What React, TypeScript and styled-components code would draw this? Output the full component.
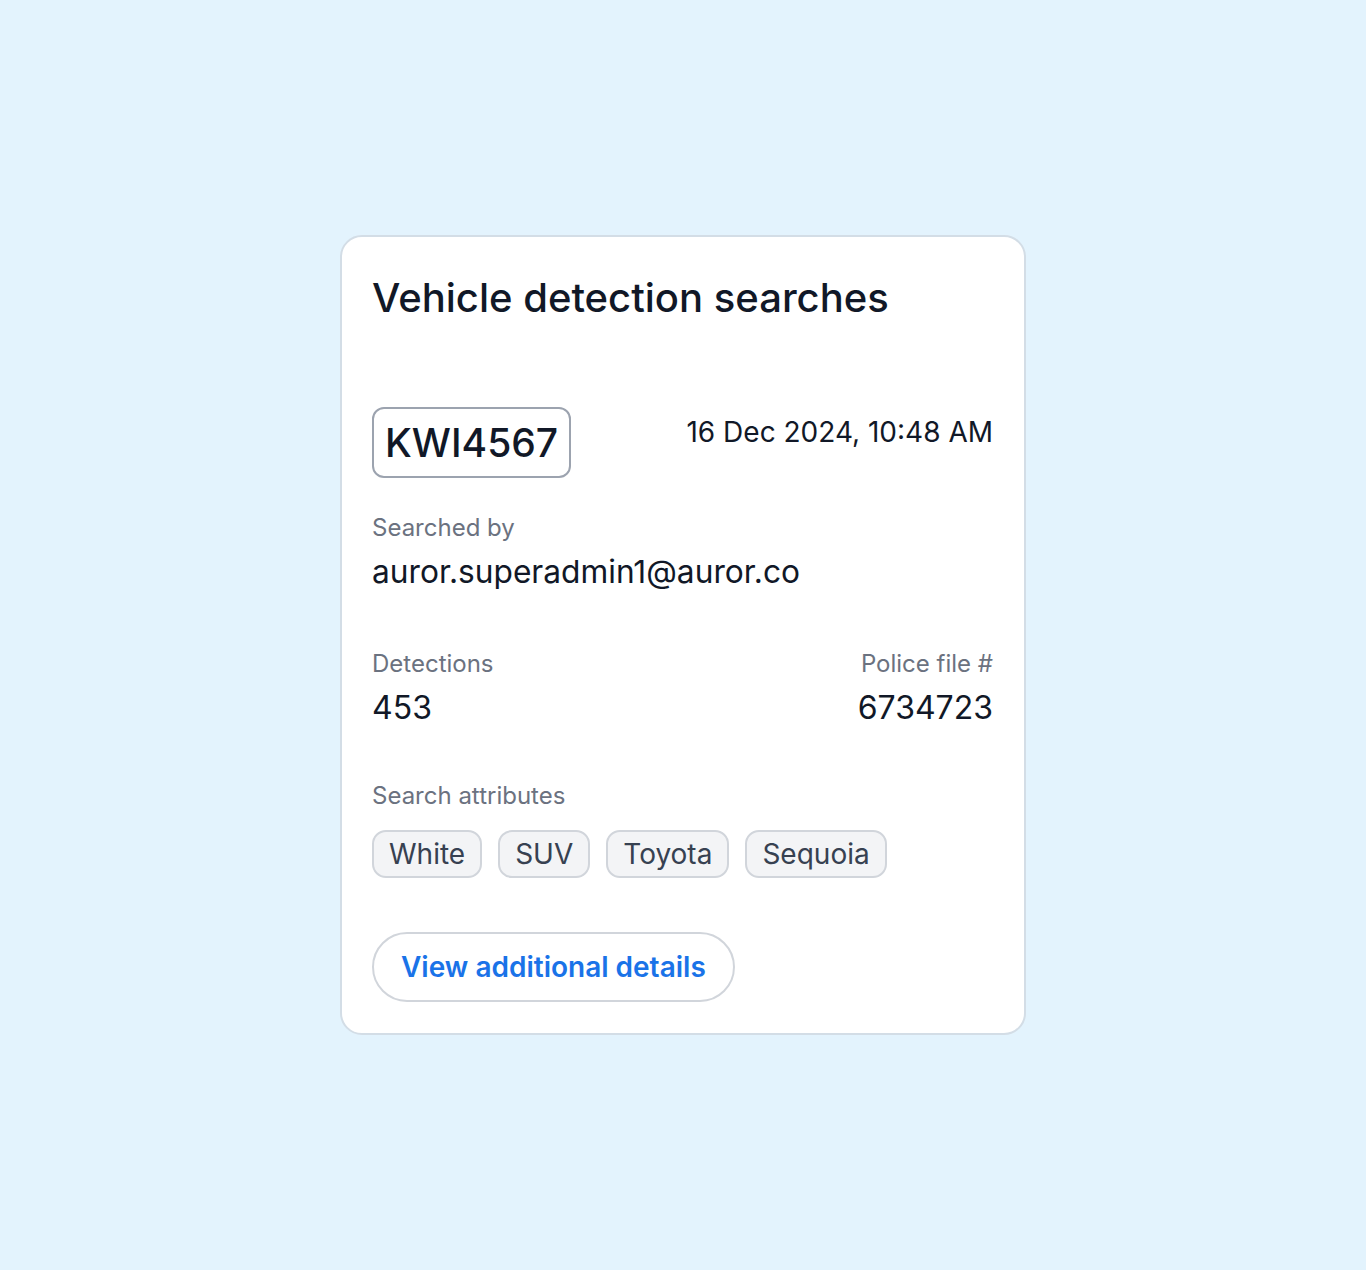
import * as React from 'react';
import styled, { createGlobalStyle } from 'styled-components';

const GlobalStyle = createGlobalStyle`
  html, body {
    margin: 0;
    padding: 0;
    background: #e3f3fd;
    font-family: Inter, "Noto Sans", sans-serif;
  }
`;

const attributes = ['White', 'SUV', 'Toyota', 'Sequoia'];

export default function App() {
  return (
    <>
      <GlobalStyle />
      <Page>
        <Card>
          <Title>Vehicle detection searches</Title>
          <TopRow>
            <Plate>KWI4567</Plate>
            <DateText>16 Dec 2024, 10:48 AM</DateText>
          </TopRow>
          <Field $gap={34}>
            <Label>Searched by</Label>
            <Email>auror.superadmin1@auror.co</Email>
          </Field>
          <SplitRow>
            <Field>
              <Label>Detections</Label>
              <Value>453</Value>
            </Field>
            <Field $right>
              <Label>Police file #</Label>
              <Value>6734723</Value>
            </Field>
          </SplitRow>
          <Field $gap={52}>
            <Label>Search attributes</Label>
            <Chips>
              {attributes.map((a) => (
                <Chip key={a}>{a}</Chip>
              ))}
            </Chips>
          </Field>
          <DetailsButton>View additional details</DetailsButton>
        </Card>
      </Page>
    </>
  );
}

const Page = styled.div`
  min-height: 1270px;
  display: flex;
  justify-content: center;
  padding-top: 235px;
  box-sizing: border-box;
`;

const Card = styled.div`
  width: 686px;
  height: 800px;
  box-sizing: border-box;
  background: #ffffff;
  border: 2px solid #d3dde6;
  border-radius: 22px;
  padding: 32px 31px 31px 30px;
  display: flex;
  flex-direction: column;
  align-items: stretch;
`;

const Title = styled.h1`
  margin: 0;
  font-size: 40px;
  line-height: 58px;
  font-weight: 500;
  color: #111827;
`;

const TopRow = styled.div`
  display: flex;
  justify-content: space-between;
  align-items: flex-start;
  margin-top: 80px;
`;

const Plate = styled.div`
  border: 2px solid #9ca3af;
  border-radius: 12px;
  padding: 0 11px;
  height: 71px;
  box-sizing: border-box;
  display: flex;
  align-items: center;
  font-size: 39px;
  font-weight: 500;
  color: #111827;
`;

const DateText = styled.div`
  font-size: 28px;
  line-height: 34px;
  margin-top: 8px;
  color: #111827;
`;

const Field = styled.div<{ $right?: boolean; $gap?: number }>`
  display: flex;
  flex-direction: column;
  align-items: ${(p) => (p.$right ? 'flex-end' : 'flex-start')};
  margin-top: ${(p) => p.$gap ?? 0}px;
`;

const Label = styled.div`
  font-size: 24px;
  line-height: 32px;
  color: #6b7280;
`;

const Email = styled.div`
  font-size: 31.7px;
  line-height: 40px;
  margin-top: 8px;
  color: #111827;
`;

const SplitRow = styled.div`
  display: flex;
  justify-content: space-between;
  margin-top: 56px;
`;

const Value = styled.div`
  font-size: 32px;
  line-height: 40px;
  margin-top: 8px;
  color: #111827;
`;

const Chips = styled.div`
  display: flex;
  gap: 16px;
  margin-top: 18px;
`;

const Chip = styled.div`
  height: 48px;
  box-sizing: border-box;
  padding: 0 15px;
  display: flex;
  align-items: center;
  background: #f3f4f6;
  border: 2px solid #d1d5db;
  border-radius: 14px;
  font-size: 28px;
  color: #374151;
`;

const DetailsButton = styled.button`
  align-self: flex-start;
  margin-top: auto;
  height: 70px;
  padding: 0 27px;
  background: #ffffff;
  border: 2px solid #d1d5db;
  border-radius: 35px;
  font-family: Inter, "Noto Sans", sans-serif;
  font-size: 28px;
  font-weight: 600;
  color: #1a73e8;
  cursor: pointer;
`;
